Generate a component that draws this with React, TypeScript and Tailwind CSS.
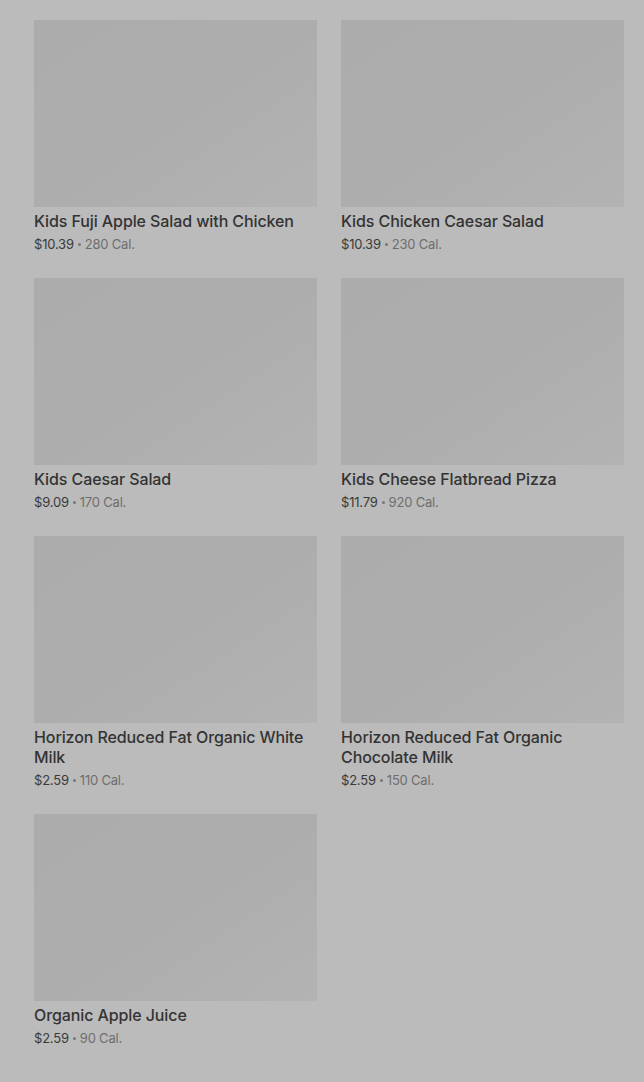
import React from "react";

type Item = {
  name: string;
  price: string;
  cal: string;
};

const items: Item[] = [
  { name: "Kids Fuji Apple Salad with Chicken", price: "$10.39", cal: "280 Cal." },
  { name: "Kids Chicken Caesar Salad", price: "$10.39", cal: "230 Cal." },
  { name: "Kids Caesar Salad", price: "$9.09", cal: "170 Cal." },
  { name: "Kids Cheese Flatbread Pizza", price: "$11.79", cal: "920 Cal." },
  { name: "Horizon Reduced Fat Organic White Milk", price: "$2.59", cal: "110 Cal." },
  { name: "Horizon Reduced Fat Organic Chocolate Milk", price: "$2.59", cal: "150 Cal." },
  { name: "Organic Apple Juice", price: "$2.59", cal: "90 Cal." },
];

function MenuCard({ item }: { item: Item }) {
  return (
    <div className="flex flex-col">
      <div className="h-[187px] w-full bg-gradient-to-br from-[#acacac] via-[#adadad] to-[#b3b3b3]" />
      <p className="mt-1 text-[16px] leading-5 font-medium tracking-[-0.1px] text-[#333333]">
        {item.name}
      </p>
      <p className="mt-[3px] flex items-center text-[13px] leading-5 tracking-[-0.2px]">
        <span className="text-[#3a3a3a]">{item.price}</span>
        <span className="mx-[4px] h-[3px] w-[3px] rounded-full bg-[#777777]" />
        <span className="text-[#6e6e6e]">{item.cal}</span>
      </p>
    </div>
  );
}

export default function App() {
  return (
    <div
      className="min-h-[1082px] bg-[#bbbbbb] pt-5 pl-[34px] pr-5 pb-8"
      style={{ fontFamily: "Inter, 'Noto Sans', sans-serif" }}
    >
      <div className="grid grid-cols-2 gap-x-6 gap-y-6">
        {items.map((item) => (
          <MenuCard key={item.name} item={item} />
        ))}
      </div>
    </div>
  );
}
